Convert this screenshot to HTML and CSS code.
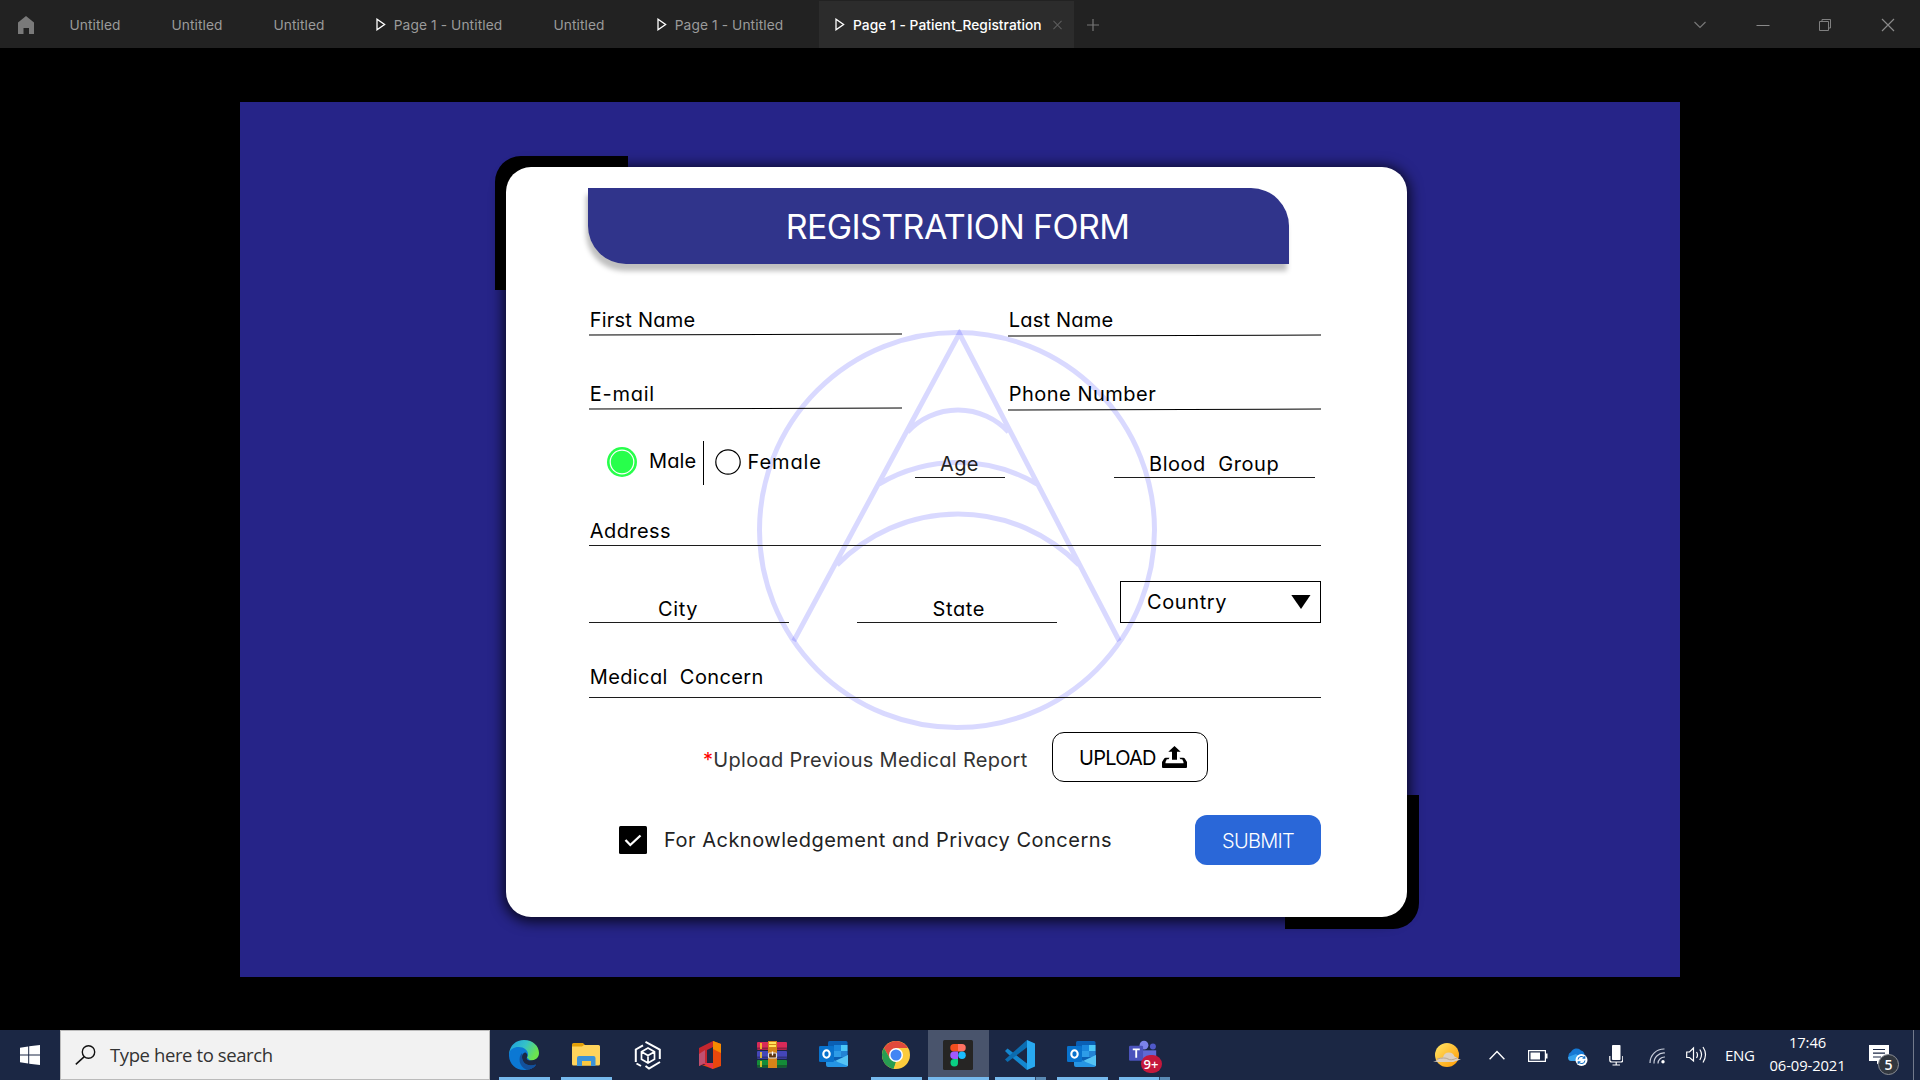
FILE: index.html
```html
<!DOCTYPE html>
<html lang="en">
<head>
<meta charset="utf-8">
<title>Patient Registration</title>
<link rel="stylesheet" href="styles.css">
</head>
<body>
<svg class="defs" aria-hidden="true">
  <symbol id="play" viewBox="0 0 10 13"><path d="M1 1.2v10.6L8.6 6.5z" fill="none" stroke="#fff" stroke-width="1.3"/></symbol>
  <symbol id="outlook" viewBox="0 0 30 30">
    <path d="M9 2.5Q9 1 10.500 1h16.500Q28.500 1 28.500 2.500V22H9z" fill="#0a5fb4"/>
    <path d="M15 5h7v6h-7z" fill="#1a86dc"/><path d="M22 5h6.500v6H22z" fill="#4cc8f8"/>
    <path d="M15 11h7v6h-7z" fill="#2d9ce8"/><path d="M22 11h6.500v6H22z" fill="#2383d4"/>
    <path d="M7 15l11 7 11-7v10q0 2-2 2H9q-2 0-2-2z" fill="#2595e4"/>
    <path d="M29 15v11L16 21z" fill="#55c3f4"/>
    <rect x="0" y="6" width="15" height="16" rx="1.300" fill="#0872cd"/>
    <ellipse cx="7.500" cy="14" rx="3.200" ry="3.700" fill="none" stroke="#fff" stroke-width="2.100"/>
  </symbol>
</svg>

<header class="tabbar">
  <svg class="home" viewBox="0 0 16 18"><path d="M8 0l8 6.500V18h-5v-6H5.500v6H0V6.500z" fill="#7a7a7a"/></svg>
  <div class="tab">Untitled</div>
  <div class="tab">Untitled</div>
  <div class="tab">Untitled</div>
  <div class="tab tab-page"><svg><use href="#play"/></svg>Page 1 - Untitled</div>
  <div class="tab">Untitled</div>
  <div class="tab tab-page tab-wide"><svg><use href="#play"/></svg>Page 1 - Untitled</div>
  <div class="tab tab-active"><svg><use href="#play"/></svg><span>Page 1 - Patient_Registration</span>
    <svg class="close" viewBox="0 0 10 10"><path d="M.5.5l9 9M9.500.5l-9 9" stroke="#5c5c5c" stroke-width="1.200"/></svg></div>
  <svg class="plus" viewBox="0 0 12 12"><path d="M6 0v12M0 6h12" stroke="#777" stroke-width="1.200"/></svg>
  <div class="window-controls">
    <svg viewBox="0 0 14 14"><path d="M1.500 4l5.500 5.500L12.500 4" fill="none" stroke="#777" stroke-width="1.200"/></svg>
    <svg viewBox="0 0 14 14"><path d="M.5 7.500h13" stroke="#8a8a8a"/></svg>
    <svg viewBox="0 0 14 14"><path d="M1.500 3.500h9v9h-9zM4 3V1.500h8.500V10H11" fill="none" stroke="#808080"/></svg>
    <svg viewBox="0 0 14 14"><path d="M1 1l12 12M13 1L1 13" stroke="#8a8a8a" stroke-width="1.200"/></svg>
  </div>
</header>

<main class="stage">
  <div class="canvas">
    <form class="card">
      <svg class="watermark" viewBox="0 0 402 402" fill="none" stroke="#0000ff" stroke-opacity=".15" stroke-width="5">
        <circle cx="201" cy="201" r="197.500"/>
        <path d="M37.700 312L203.400 4.500 363.300 312M151.500 103a69 69 0 0 1 101 0M123 155a156 156 0 0 1 158 0M81 236a169 169 0 0 1 242 0"/>
      </svg>
      <h1 class="banner">REGISTRATION FORM</h1>
      <div class="row row-name">
        <div class="field tilt"><span class="t-first">First Name</span></div>
        <div class="field tilt low"><span class="t-last">Last Name</span></div>
      </div>
      <div class="row row-contact">
        <div class="field tilt"><span class="t-mail">E-mail</span></div>
        <div class="field tilt low"><span class="t-phone">Phone Number</span></div>
      </div>
      <div class="row row-person">
        <div class="gender">
          <svg class="radio-on" viewBox="0 0 30 30"><circle cx="15" cy="15" r="15" fill="#27ff4b"/><circle cx="15" cy="15" r="11.800" fill="none" stroke="#fff" stroke-width="1.200"/></svg>
          <span class="t-male">Male</span>
          <i class="divider"></i>
          <svg class="radio-off" viewBox="0 0 26 26"><circle cx="13" cy="13" r="12.200" fill="#fff" stroke="#000" stroke-width="1.200"/></svg>
          <span class="t-female">Female</span>
        </div>
        <div class="field age"><span class="t-age">Age</span></div>
        <div class="field blood"><span class="t-blood">Blood&nbsp; Group</span></div>
      </div>
      <div class="row row-address"><div class="field"><span class="t-address">Address</span></div></div>
      <div class="row row-place">
        <div class="field city"><span class="t-city">City</span></div>
        <div class="field state"><span class="t-state">State</span></div>
        <div class="select"><span class="t-country">Country</span><svg viewBox="0 0 20 14"><path d="M.3 0h19.200L10 14z"/></svg></div>
      </div>
      <div class="row row-medical"><div class="field"><span class="t-medical">Medical&nbsp; Concern</span></div></div>
      <div class="row row-upload">
        <span class="t-report"><b>*</b>Upload Previous Medical Report</span>
        <div class="upload"><span class="t-upload">UPLOAD</span>
          <svg viewBox="0 0 25 22"><path d="M12.500 0l6.200 5.800H15v8h-5v-8H6.300zM0 18v-2l2.200-3.500q.5-.8 1.500-.8h3.800l-1 1.500H4.800L3.500 16v1.200h18V16l-1.300-2.800h-1.700l-1-1.500h3.800q1 0 1.500.8L25 16v5q0 1-1 1H1q-1 0-1-1z"/></svg>
        </div>
      </div>
      <div class="row row-submit">
        <svg class="check" viewBox="0 0 28 28"><rect width="28" height="28" rx="1.500"/><path d="M6.500 14l4.800 5L21.500 9.500" fill="none" stroke="#fff" stroke-width="2.300"/></svg>
        <span class="t-ack">For Acknowledgement and Privacy Concerns</span>
        <div class="submit"><span class="t-submit">SUBMIT</span></div>
      </div>
    </form>
  </div>
</main>

<footer class="taskbar">
  <div class="start"><svg viewBox="0 0 20 20"><path d="M0 2.700l8.200-1.200v8H0zM9.200 1.300L20 0v9.500H9.200zM0 10.500h8.200v8L0 17.300zM9.200 10.500H20V20L9.200 18.700z" fill="#fff"/></svg></div>
  <div class="search"><svg viewBox="0 0 21 20"><circle cx="13.500" cy="7" r="6.200" fill="none" stroke="#111" stroke-width="1.400"/><path d="M9.300 11.600L.8 19.400" stroke="#111" stroke-width="1.500"/></svg><span>Type here to search</span></div>
  <div class="apps">
    <div class="app open"><svg viewBox="0 0 30 30">
      <defs><linearGradient id="eg" x1="0" x2="1" y1="0" y2=".4"><stop offset="0" stop-color="#1b9de0"/><stop offset=".55" stop-color="#35c1c8"/><stop offset="1" stop-color="#6be34e"/></linearGradient></defs>
      <path d="M0 14C1 5 7 0 15 0c9 0 15 6 15 13 0 5-4 7.500-8 7.500-3.500 0-5-1.500-4-3L12 12z" fill="url(#eg)"/>
      <path d="M0 14C1 9 5 7 9.500 7c6 0 10 4 9.500 8-.3 1.500-1 2-1 2.500L26.500 25.500C24 28.500 19 30 15 30 6 30-.5 23 0 14z" fill="#0b78d4"/>
      <path d="M13 13c-4 4-3.500 13.500 4.500 16.800 5-.5 7.500-2.500 9.500-5.300-6 2.500-14 .5-14-7.500 0-2 .5-3 0-4z" fill="#13509c"/>
      <path d="M13 17c0-3 1.800-4.500 3.500-4.500 2 1 2.200 3.200 1.500 5-1 1.500.5 3 4 3 3 0 5-1 6.500-2.500l-1.500 6.200c-6 3-14 .3-14-7.200z" fill="#1b2744"/>
      <path d="M13 17c0 7.500 7 10 13.500 7.500.7-.3.800.2.500.5-1.500 2-4 4-7 4.500C15 28 12 22 13 17z" fill="#13509c"/>
    </svg></div>
    <div class="app open"><svg viewBox="0 0 30 30"><path d="M1 4.500Q1 3 2.500 3H12l3 3h12q2 0 2 2H1z" fill="#e3a008"/><path d="M1 6.500h10l2-1.500h14.500Q29 5 29 6.500V24q0 1.500-1.500 1.500h-25Q1 25.500 1 24z" fill="#ffd45c"/><path d="M6 26v-8q0-2 2-2h14.500q2 0 2 2v8H20v-5h-9v5z" fill="#3d93d8"/><path d="M11 21h9v4.500h-9z" fill="#fbc83f"/></svg></div>
    <div class="app"><svg viewBox="0 0 30 30" fill="none" stroke="#fff" stroke-width="2"><path d="M12.500 1.800L26.800 9.500V19M2.800 22V9.500L10 5.300M3.500 23.500L8 26M12.500 26L16 28.500l11-6.500" /><path d="M15 8l6.500 3.700v7.500L15 23l-6.500-3.800v-7.500zM8.500 11.700L15 15.500l6.500-3.800M15 15.500V23" stroke-width="1.700"/></svg></div>
    <div class="app"><svg viewBox="0 0 30 30"><path d="M4 8L18 1v6l-6 3v13l-8 3z" fill="#c4262e"/><path d="M4 14l6-4v13l-6 3z" fill="#c05070"/><path d="M18 1l8 3v22l-8 3-11-4h11z" fill="#e8480c"/><path d="M18 1l8 3v9l-8-4z" fill="#f88a00"/><path d="M7 23h11v6z" fill="#e3344c"/></svg></div>
    <div class="app"><svg viewBox="0 0 30 30"><rect y="2" width="30" height="8" rx="1" fill="#d82a58"/><rect y="11" width="30" height="8" rx="1" fill="#4446b8"/><rect y="20" width="30" height="7.500" rx="1" fill="#148c38"/><path d="M0 8.500h30M0 17.500h30M0 26h30" stroke="#191722" stroke-opacity=".4" stroke-width="2"/><path d="M4 3v6M4 12v6M4 21v6" stroke="#ffd02a" stroke-width="1.600"/><rect x="11" y="1" width="9" height="27" fill="#d68419"/><path d="M12 3h7M12 6h7" stroke="#ffe35a" stroke-width="1.800"/><rect x="11.500" y="13" width="8" height="5" rx="1" fill="#5c320e" stroke="#ddd" stroke-width="1.200"/><path d="M15.500 11.500v4" stroke="#fff" stroke-width="1.300"/></svg></div>
    <div class="app"><svg><use href="#outlook"/></svg></div>
    <div class="app open"><svg viewBox="0 0 30 30"><circle cx="15" cy="15" r="14" fill="#fccb3c"/><path d="M2.900 8A14 14 0 0 1 27.100 8H15L9 18.500z" fill="#e04a3c"/><path d="M2.900 8L9 18.500 15 22l-2 6.900A14 14 0 0 1 2.900 8z" fill="#279c52"/><path d="M21 18.500L14.500 29h-2L15 22z" fill="#fccb3c"/><circle cx="15" cy="15" r="7" fill="#fff"/><circle cx="15" cy="15" r="5.500" fill="#4285f4"/></svg></div>
    <div class="app open active"><svg viewBox="0 0 30 30"><rect width="30" height="30" rx="1.500" fill="#262524"/><path d="M15 4v7.500h-4a3.750 3.750 0 0 1 0-7.500z" fill="#f24e1e"/><path d="M15 4h4a3.750 3.750 0 0 1 0 7.500h-4z" fill="#ff7262"/><path d="M15 11.500V19h-4a3.750 3.750 0 0 1 0-7.500z" fill="#a259ff"/><circle cx="19" cy="15.250" r="3.750" fill="#1abcfe"/><path d="M15 19v3.500A3.750 3.750 0 1 1 11.300 19z" fill="#0acf83"/></svg></div>
    <div class="app open multi"><svg viewBox="0 0 30 30"><path d="M0 11l2.500-2.500L22 23.500V30L3 14z" fill="#1487cf"/><path d="M0 19.500L22 0v7.500L2.500 22z" fill="#0b6cb0"/><path d="M22 0l8 3.500v23L22 30V8l-9 7 9 7.500z" fill="#28a9f1"/><path d="M22 7.500V23l-10-7.700z" fill="#1b2744"/></svg></div>
    <div class="app open"><svg><use href="#outlook"/></svg></div>
    <div class="app open multi"><svg class="teams" viewBox="0 0 32 32"><circle cx="16" cy="5.500" r="4.700" fill="#7b83eb"/><circle cx="25.500" cy="7" r="3.200" fill="#5059c9"/><path d="M14 11h15v10H14z" fill="#6069d6"/><rect y="6" width="15" height="16" rx="1.300" fill="#4b53bc"/><path d="M4 10h7.500M7.700 10v9" stroke="#fff" stroke-width="2"/></svg><em>9+</em></div>
  </div>
  <div class="tray">
    <svg class="weather" viewBox="0 0 28 24"><defs><linearGradient id="sun" x1="0" x2="1" y1="0" y2="1"><stop offset="0" stop-color="#ffe66a"/><stop offset="1" stop-color="#ff9900"/></linearGradient></defs><circle cx="14" cy="12" r="12" fill="url(#sun)"/><path d="M0 18.500q5-1 6-3 2-1 4-1 1-5 6-5 4 0 5.500 4 3 .5 3.500 2.500l3 .5-5 1.500-3 1H6z" fill="#ddd0c0"/><path d="M4 16q8-2 11 0t9-1" fill="none" stroke="#b9a791" stroke-width="1"/></svg>
    <svg class="caret" viewBox="0 0 16 10"><path d="M.6 9.200L8 1.500l7.400 7.700" fill="none" stroke="#fff" stroke-width="1.400"/></svg>
    <svg class="battery" viewBox="0 0 20 12"><path d="M.6.6h16.800v10.800H.6z" fill="none" stroke="#fff" stroke-width="1.200"/><path d="M2.500 2.500h9.500v7H2.500zM18 3.500h1.500v5H18z" fill="#fff"/></svg>
    <svg class="cloud" viewBox="0 0 21 18"><path d="M5 12.500A4.500 4.500 0 0 1 4 4 6 6 0 0 1 14 2.500 4.500 4.500 0 0 1 17 9l-5 4z" fill="#1578d4"/><path d="M1 9l8-3 8 6-5 1H4q-3 0-3-4z" fill="#36a3ee"/><circle cx="14.500" cy="12" r="6" fill="#fff"/><path d="M11 11.500a3.600 3.600 0 0 1 6.500-1.500M18 12.500a3.600 3.600 0 0 1-6.500 1.500M17.800 8v2.300h-2.300M11.200 16v-2.300h2.300" fill="none" stroke="#1470c4" stroke-width="1.100"/></svg>
    <svg class="mic" viewBox="0 0 14 21"><rect x="3" y="0" width="8.500" height="15" rx=".8" fill="#fff"/><path d="M.8 11v4q0 2 2 2h9q2 0 2-2v-4M7.200 17v3M3.500 20h7.500" fill="none" stroke="#fff" stroke-width="1.200"/></svg>
    <svg class="wifi" viewBox="0 0 17 16" fill="none" stroke="#c9cedb" stroke-width="1.200"><path d="M1 15A14 14 0 0 1 15.500 1M5 15.500A10 10 0 0 1 16 5M9 15.500A6.500 6.500 0 0 1 16 9"/><circle cx="14" cy="13.800" r="1.700" fill="#fff" stroke="none"/></svg>
    <svg class="sound" viewBox="0 0 21 18" fill="none" stroke="#fff" stroke-width="1.200"><path d="M.7 6h2.800L7.500 2v13L3.500 11.500H.7z"/><path d="M10.500 6q2 3 0 6M13.800 3.500q3.500 5 0 10.500M17 1q5 7.500 0 15.500"/></svg>
    <span class="lang">ENG</span>
    <div class="clock"><span class="time">17:46</span><span class="date">06-09-2021</span></div>
    <div class="notes"><svg viewBox="0 0 20 20"><path d="M0 0h20v16h-8.500L8 19.500V16H0z" fill="#fff"/><path d="M4 4.500h12M4 8.200h12M4 12h8" stroke="#1b2744" stroke-width="1.200"/></svg><em>5</em></div>
  </div>
</footer>
</body>
</html>
```
FILE: styles.css
```css
* { box-sizing: border-box; }
body { margin: 0; width: 1920px; height: 1080px; overflow: hidden; display: flex; flex-direction: column; background: #000; font-family: Inter, "Liberation Sans", sans-serif; }
svg { display: block; flex: none; }
.defs { position: absolute; width: 0; height: 0; }

/* tab strip */
.tabbar { height: 48px; background: #222; display: flex; align-items: center; color: #9b9b9b; font-size: 13.75px; white-space: nowrap; letter-spacing: .1px; }
.home { width: 16px; height: 18px; margin: 2px 10px 0 18px; }
.tab { height: 48px; width: 102px; display: flex; align-items: center; justify-content: center; padding-top: 2px; }
.tab svg { width: 10px; height: 13px; margin-right: 8px; margin-top: -1px; }
.tab-page { width: 178px; }
.tab-wide { width: 189px; padding-right: 9px; }
.tab-active { width: 255px; margin-top: 1px; height: 47px; padding: 1px 0 0 16px; justify-content: flex-start; background: #2c2c2c; color: #fff; font-weight: 500; }
.tab-active span { letter-spacing: .04px; width: 200px; }
.tab svg.close { width: 9px; height: 10px; margin: 0; }
.plus { width: 12px; height: 12px; margin: 2px 0 0 12.500px; }
.window-controls { margin: 2px 25.500px 0 auto; display: flex; gap: 48.500px; }
.window-controls svg { width: 14px; height: 14px; }

/* prototype canvas */
.stage { height: 982px; padding: 54px 0 0 240px; }
.canvas { width: 1440px; height: 874.500px; padding: 65px 0 0 266px; background: #262488; position: relative; z-index: 0; }
.card { width: 901px; height: 750px; padding: 21px 86px 0 83px; background: #fff; border-radius: 25px; position: relative; box-shadow: 0 2px 13px 3px rgba(0,0,0,.75); display: flex; flex-direction: column; color: #000; font-size: 20px; line-height: 24px; font-feature-settings: "cv11"; font-weight: 400; white-space: nowrap; }
.canvas::before, .canvas::after { content: ""; position: absolute; z-index: -1; width: 134px; height: 134px; background: #000; }
.canvas::before { left: 254.500px; top: 54px; width: 133.500px; border-top-left-radius: 26px; }
.canvas::after { left: 1045px; top: 692.500px; border-bottom-right-radius: 26px; }
.watermark { position: absolute; left: 250px; top: 162px; width: 402px; height: 402px; }
.card > .row, .banner { position: relative; }
.banner { margin: 0 0 0 -1px; width: 701px; height: 76px; display: flex; align-items: center; justify-content: center; padding: 2px 0 0 38px; border-radius: 0 38px 0 38px; background: #30348b; color: #fff; font-size: 34px; font-weight: 400; letter-spacing: -.6px; box-shadow: -2px 7px 5px rgba(0,0,0,.25); }
.row { display: flex; align-items: flex-end; justify-content: space-between; }
.field { border-bottom: 1px solid #1c1c1c; padding: 0 0 2.500px .7px; display: flex; width: 100%; }
.row-name { height: 71px; }
.row-contact { height: 74px; }
.row-name .field, .row-contact .field { width: 313px; }
.row-name .field { padding-bottom: 2px; }
.tilt { position: relative; border-bottom-color: transparent; }
.tilt::after { content: ""; position: absolute; left: 0; right: 0; bottom: -1px; height: 1.200px; background: #000; transform: rotate(-.15deg); }
.tilt.low::after { bottom: -2px; }
.row-person { height: 69px; padding-right: 6px; }
.gender { display: flex; align-items: center; height: 44px; margin: 0 0 -7px 18px; width: 308px; }
.radio-on { width: 30px; height: 30px; margin-top: -3px; }
.t-male { margin: -5px 0 0 12px; width: 53.500px; letter-spacing: .1px; }
.divider { width: 1px; height: 44px; background: #000; margin-right: 11px; }
.radio-off { width: 26px; height: 26px; margin: -3px 7px 0 0; }
.t-female { margin-top: -3px; letter-spacing: .9px; }
.row-person .age { width: 90px; margin: 0 109px 0 0; padding: 0 0 1.500px 25px; }
.row-person .blood { width: 201px; padding: 0 0 1px 35px; }
.t-age { color: #222; letter-spacing: .4px; }
.t-blood { letter-spacing: .55px; }
.t-first, .t-last { letter-spacing: .22px; }
.t-mail { letter-spacing: .75px; }
.t-phone { letter-spacing: .5px; }
.t-address { letter-spacing: .45px; }
.t-city { letter-spacing: .65px; }
.t-state { letter-spacing: .6px; }
.t-country { letter-spacing: .6px; }
.t-medical { letter-spacing: .4px; }
.row-address { height: 68px; }
.row-address .field { padding-bottom: 2.500px; }
.row-place { height: 77px; }
.row-place .field { width: 200px; padding-bottom: 1px; }
.row-place .city { padding-left: 69px; }
.row-place .state { padding-left: 76px; margin-left: 4px; }
.select { width: 201px; height: 42px; border: 1.300px solid #000; display: flex; align-items: center; justify-content: space-between; padding: 0 9px 0 26px; }
.select svg { width: 20px; height: 14px; }
.row-medical { height: 75px; }
.row-medical .field { padding-bottom: 8px; }
.row-upload { margin-top: 34px; height: 50px; align-items: center; justify-content: flex-start; padding-left: 114px; color: #333; }
.row-upload b { color: #f00; font-weight: 400; }
.t-report { padding-top: 6px; width: 349px; letter-spacing: .3px; }
.upload { width: 156px; height: 50px; border: 1.400px solid #000; border-radius: 12px; display: flex; align-items: center; padding-left: 26px; color: #000; }
.t-upload { width: 83px; padding-top: 2px; letter-spacing: -.75px; }
.upload svg { width: 25px; height: 22px; }
.row-submit { margin-top: 33px; height: 50px; align-items: center; justify-content: flex-start; padding-left: 30px; color: #222; }
.check { width: 28px; height: 28px; margin: 0 17px 0 0; }
.t-ack { letter-spacing: .5px; }
.submit { margin-left: auto; width: 126px; height: 50px; border-radius: 12px; background: #2a67d8; color: #fff; display: flex; align-items: center; justify-content: center; font-weight: 350; padding-top: 1px; letter-spacing: -.75px; }

/* taskbar */
.taskbar { height: 50px; background: #1b2744; display: flex; color: #fff; font-family: "Open Sans", "Noto Sans", sans-serif; }
.start { width: 60px; display: flex; align-items: center; justify-content: center; }
.start svg { width: 20px; height: 20px; }
.search { width: 430px; background: #f2f2f2; border: 1px solid #bbb; display: flex; align-items: center; padding-left: 14px; color: #333; font-size: 18.500px; letter-spacing: -.4px; }
.search span { margin-top: -2px; }
.search svg { width: 21px; height: 20px; margin-right: 14px; }
.apps { display: flex; gap: 1px; padding-left: 3.500px; }
.app { width: 61px; position: relative; display: flex; align-items: center; justify-content: center; }
.app svg { width: 30px; height: 30px; }
.app.open::after { content: ""; position: absolute; bottom: 0; left: 5px; width: 51px; height: 3px; background: #76b9ed; }
.app.active { background: #49546c; }
.app.active::after { left: 0; width: 61px; }
.app.multi::after { background: linear-gradient(90deg, #76b9ed 40px, #2c4568 40px, #2c4568 41px, #5a8ab5 41px); }
.app em { position: absolute; left: 27px; top: 25px; width: 21px; height: 18px; border-radius: 10px; background: #c4183c; font: 600 13px/18px "Open Sans", sans-serif; text-align: center; }
.tray { margin-left: auto; width: 481px; display: flex; align-items: center; border-right: 0; padding-right: 5px; }
.weather { width: 28px; height: 24px; margin-left: -6px; }
.caret { width: 16px; height: 10px; margin-left: 28px; }
.battery { width: 20px; height: 12px; margin: 1px 0 0 23px; }
.cloud { width: 21px; height: 18px; margin: 3px 0 0 19px; }
.mic { width: 14px; height: 21px; margin-left: 21px; }
.wifi { width: 17px; height: 16px; margin: 1px 0 0 26px; }
.sound { width: 21px; height: 18px; margin-left: 20px; }
.lang { font-size: 15px; margin: 0 0 0 18px; width: 44px; letter-spacing: -.3px; }
.clock { display: flex; flex-direction: column; align-items: center; width: 77px; font-size: 14.750px; line-height: 23px; margin-top: -2px; letter-spacing: -.1px; white-space: nowrap; }
.notes { position: relative; margin-left: 23px; width: 45px; padding-bottom: 4px; height: 50px; display: flex; align-items: center; border-right: 1px solid #727a8c; padding-top: 4px; }
.notes svg { width: 20px; height: 20px; }
.notes em { position: absolute; left: 9px; top: 24px; width: 21px; height: 21px; border-radius: 50%; background: #32373f; border: 1px solid #8a8d94; font: 600 14px/19px "Open Sans", sans-serif; text-align: center; }
```
